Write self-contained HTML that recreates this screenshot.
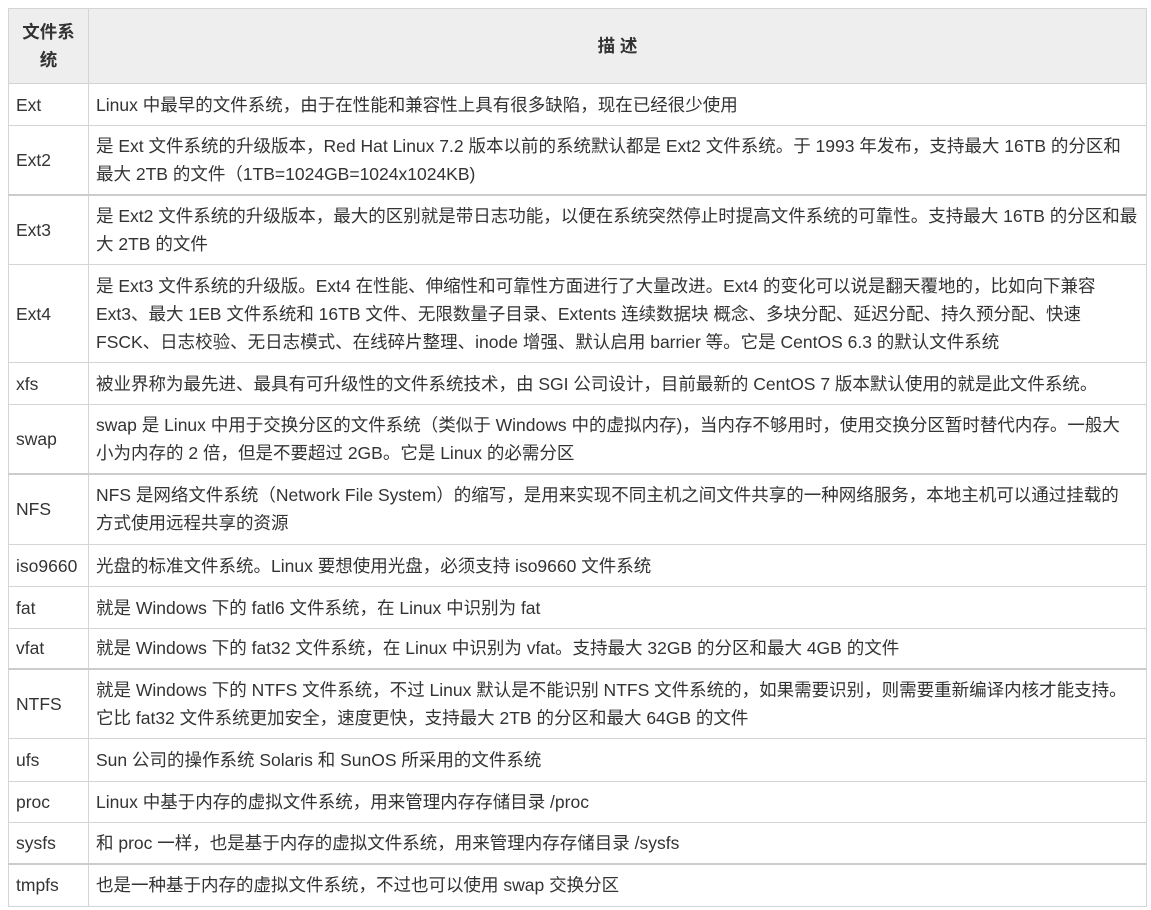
<!DOCTYPE html>
<html><head><meta charset="utf-8"><style>
body{margin:0;background:#fff;}
table{position:absolute;left:8px;top:8px;width:1139px;border-collapse:collapse;font-family:"Liberation Sans","Noto Sans CJK SC",sans-serif;font-size:17.5px;color:#333;table-layout:fixed}
td,th{border:1px solid #d4d4d4;padding:0 7px;line-height:28px;white-space:nowrap;vertical-align:middle;text-align:left}
th{background:#eeeeee;font-weight:bold;white-space:normal}
th.c{text-align:center}
tr.t td{border-bottom:2px solid #cccccc}
col.a{width:80px}
</style></head><body>
<table>
<colgroup><col class="a"><col></colgroup>
<tr style="height:75px"><th style="text-align:center;padding:0 10px">文件系统</th><th class="c">描 述</th></tr>
<tr style="height:42px"><td>Ext</td><td>Linux 中最早的文件系统，由于在性能和兼容性上具有很多缺陷，现在已经很少使用</td></tr>
<tr class="t" style="height:69px"><td>Ext2</td><td>是 Ext 文件系统的升级版本，Red Hat Linux 7.2 版本以前的系统默认都是 Ext2 文件系统。于 1993 年发布，支持最大 16TB 的分区和<br>最大 2TB 的文件（1TB=1024GB=1024x1024KB)</td></tr>
<tr style="height:70px"><td>Ext3</td><td>是 Ext2 文件系统的升级版本，最大的区别就是带日志功能，以便在系统突然停止时提高文件系统的可靠性。支持最大 16TB 的分区和最<br>大 2TB 的文件</td></tr>
<tr style="height:98px"><td>Ext4</td><td>是 Ext3 文件系统的升级版。Ext4 在性能、伸缩性和可靠性方面进行了大量改进。Ext4 的变化可以说是翻天覆地的，比如向下兼容<br>Ext3、最大 1EB 文件系统和 16TB 文件、无限数量子目录、Extents 连续数据块 概念、多块分配、延迟分配、持久预分配、快速<br>FSCK、日志校验、无日志模式、在线碎片整理、inode 增强、默认启用 barrier 等。它是 CentOS 6.3 的默认文件系统</td></tr>
<tr style="height:42px"><td>xfs</td><td>被业界称为最先进、最具有可升级性的文件系统技术，由 SGI 公司设计，目前最新的 CentOS 7 版本默认使用的就是此文件系统。</td></tr>
<tr class="t" style="height:69px"><td>swap</td><td>swap 是 Linux 中用于交换分区的文件系统（类似于 Windows 中的虚拟内存)，当内存不够用时，使用交换分区暂时替代内存。一般大<br>小为内存的 2 倍，但是不要超过 2GB。它是 Linux 的必需分区</td></tr>
<tr style="height:71px"><td>NFS</td><td>NFS 是网络文件系统（Network File System）的缩写，是用来实现不同主机之间文件共享的一种网络服务，本地主机可以通过挂载的<br>方式使用远程共享的资源</td></tr>
<tr style="height:42px"><td>iso9660</td><td>光盘的标准文件系统。Linux 要想使用光盘，必须支持 iso9660 文件系统</td></tr>
<tr style="height:42px"><td>fat</td><td>就是 Windows 下的 fatl6 文件系统，在 Linux 中识别为 fat</td></tr>
<tr class="t" style="height:40px"><td>vfat</td><td>就是 Windows 下的 fat32 文件系统，在 Linux 中识别为 vfat。支持最大 32GB 的分区和最大 4GB 的文件</td></tr>
<tr style="height:70px"><td>NTFS</td><td>就是 Windows 下的 NTFS 文件系统，不过 Linux 默认是不能识别 NTFS 文件系统的，如果需要识别，则需要重新编译内核才能支持。<br>它比 fat32 文件系统更加安全，速度更快，支持最大 2TB 的分区和最大 64GB 的文件</td></tr>
<tr style="height:43px"><td>ufs</td><td>Sun 公司的操作系统 Solaris 和 SunOS 所采用的文件系统</td></tr>
<tr style="height:41px"><td>proc</td><td>Linux 中基于内存的虚拟文件系统，用来管理内存存储目录 /proc</td></tr>
<tr class="t" style="height:41px"><td>sysfs</td><td>和 proc 一样，也是基于内存的虚拟文件系统，用来管理内存存储目录 /sysfs</td></tr>
<tr style="height:43px"><td>tmpfs</td><td>也是一种基于内存的虚拟文件系统，不过也可以使用 swap 交换分区</td></tr>
</table>
</body></html>
